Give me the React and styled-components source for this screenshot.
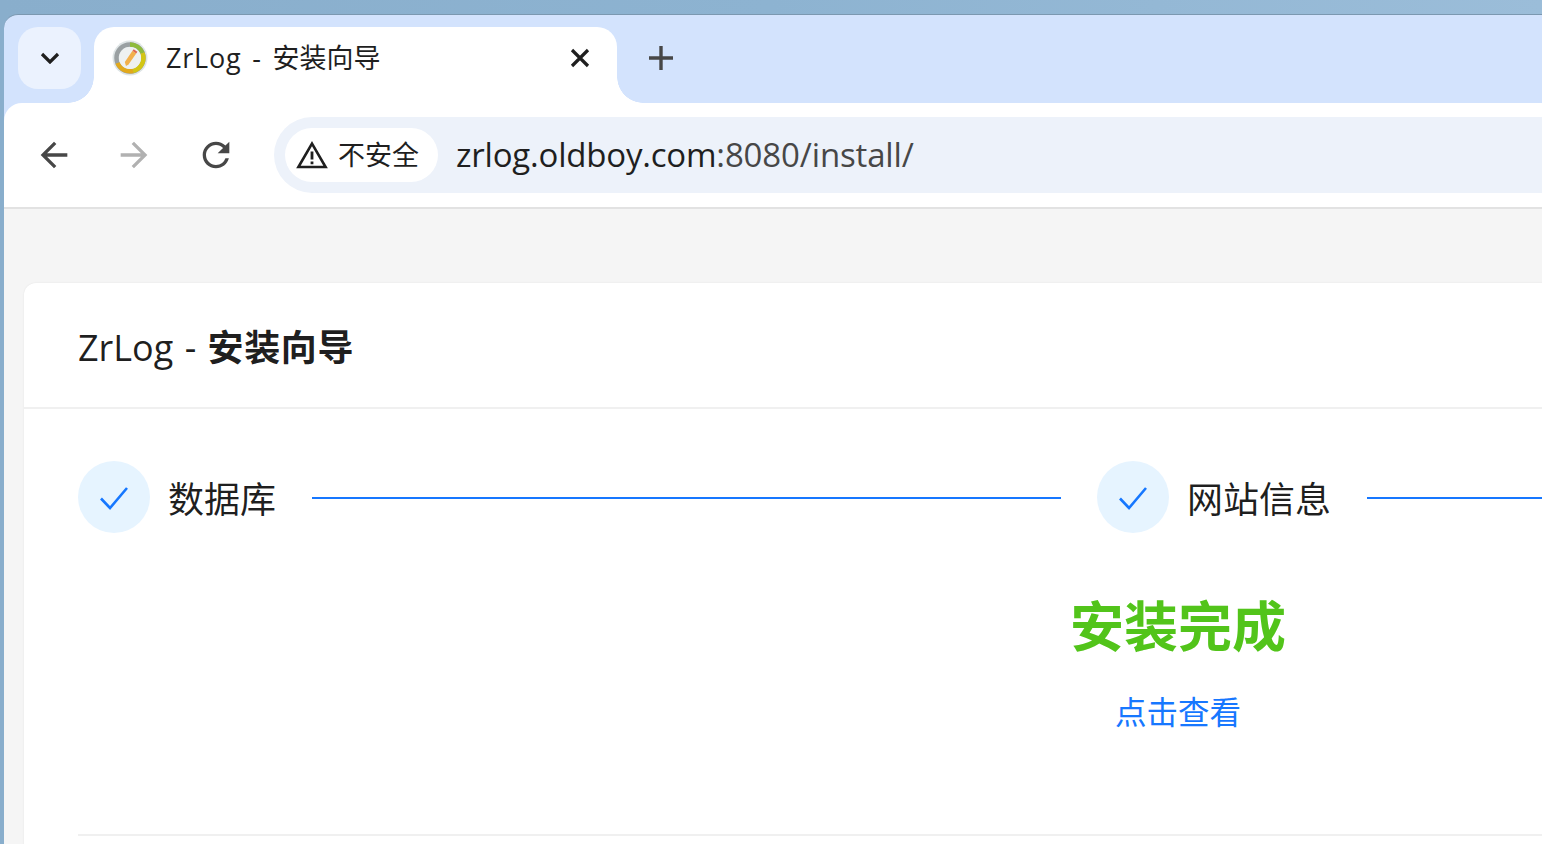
import React from "react";
import styled, { createGlobalStyle } from "styled-components";

const Global = createGlobalStyle`
  html, body { margin: 0; padding: 0; width: 1542px; height: 844px; overflow: hidden; }
  body { background: linear-gradient(90deg, #89aecc 0%, #8db3d1 50%, #9bbdd9 100%); }
  #root { width: 1542px; height: 844px; overflow: hidden; }
  * { box-sizing: border-box; }
`;

const FONT = `"Open Sans", "Noto Sans CJK SC", sans-serif`;

const Screen = styled.div`
  width: 1542px;
  height: 844px;
  padding: 14px 0 0 4px;
  overflow: hidden;
  font-family: ${FONT};
`;
const Browser = styled.div`
  width: 1600px;
  height: 830px;
  border-top: 1px solid #7b98b0;
  border-top-left-radius: 14px;
  background: #d3e3fd;
  overflow: hidden;
  display: flex;
  flex-direction: column;
`;
const TabStrip = styled.div`
  height: 88px;
  flex: none;
  padding: 12px 0 0 14px;
  display: flex;
  align-items: flex-start;
`;
const TabSearch = styled.button`
  width: 63px;
  height: 62px;
  border: 0;
  border-radius: 20px;
  background: #ebf2fe;
  display: flex;
  align-items: center;
  justify-content: center;
  padding: 0;
  position: relative;
  z-index: 2;
`;
const Tab = styled.div`
  width: 523px;
  height: 76px;
  margin-left: 13px;
  background: #fff;
  border-radius: 20px 20px 0 0;
  position: relative;
  display: flex;
  align-items: center;
  padding: 0 27px 14px 18px;
  &::before, &::after {
    content: "";
    position: absolute;
    bottom: 0;
    width: 26px;
    height: 26px;
  }
  &::before {
    right: 100%;
    background: radial-gradient(circle at 0 0, #d3e3fd 25.5px, #fff 26px);
  }
  &::after {
    left: 100%;
    background: radial-gradient(circle at 100% 0, #d3e3fd 25.5px, #fff 26px);
  }
`;
const TabTitle = styled.span`
  margin-left: 18px;
  flex: 1;
  font-size: 27px;
  line-height: 36px;
  color: #1f1f1f;
  font-weight: 400;
  white-space: pre;
`;
const TabLatin = styled.span`
  letter-spacing: 0.8px;
  word-spacing: 3px;
`;
const NewTab = styled.div`
  width: 24px;
  height: 24px;
  margin: 19px 0 0 32px;
  display: flex;
`;
const Toolbar = styled.div`
  height: 106px;
  flex: none;
  background: #fff;
  border-top-left-radius: 18px;
  border-bottom: 2px solid #e2e2e2;
  display: flex;
  align-items: flex-start;
  padding: 14px 0 0 30px;
  position: relative;
`;
const NavButton = styled.div`
  width: 40px;
  height: 76px;
  margin-right: ${p => p.$gap}px;
  display: flex;
  align-items: center;
  justify-content: center;
`;
const Omnibox = styled.div`
  height: 76px;
  flex: 1;
  margin-left: 38px;
  background: #edf2fa;
  border-radius: 38px 0 0 38px;
  display: flex;
  align-items: center;
  padding-left: 11px;
`;
const Chip = styled.div`
  width: 153px;
  height: 54px;
  background: #fff;
  border-radius: 27px;
  display: flex;
  align-items: center;
  padding-left: 11px;
  gap: 10px;
`;
const ChipText = styled.span`
  font-size: 27px;
  line-height: 36px;
  color: #1f1f1f;
  font-weight: 400;
`;
const Url = styled.div`
  margin-left: 18px;
  font-size: 33px;
  line-height: 44px;
  color: #1f1f1f;
  white-space: pre;
  letter-spacing: -0.2px;
`;
const UrlMuted = styled.span`
  color: #474747;
  letter-spacing: -0.15px;
`;
const Page = styled.div`
  flex: 1;
  background: #f5f5f5;
  padding: 74px 0 0 20px;
`;
const Card = styled.div`
  width: 2300px;
  height: 700px;
  background: #fff;
  border-radius: 12px 0 0 0;
  box-shadow: 0 0 2px rgba(0,0,0,.08);
`;
const CardHead = styled.div`
  height: 126px;
  border-bottom: 2px solid #f0f0f0;
  padding: 6px 0 0 54px;
  display: flex;
  align-items: center;
  font-size: 36px;
  line-height: 48px;
  color: rgba(0,0,0,.88);
  white-space: pre;
  word-spacing: 2px;
`;
const HeadStrong = styled.strong`
  font-weight: 700;
  letter-spacing: 0.6px;
`;
const CardBody = styled.div`
  padding: 52px 0 0 54px;
  width: 2254px;
`;
const Steps = styled.div`
  display: flex;
  width: 2200px;
`;
const Step = styled.div`
  flex: 0 0 ${p => p.$width}px;
  display: flex;
  align-items: flex-start;
  padding-right: 0;
`;
const StepIcon = styled.div`
  width: 72px;
  height: 72px;
  border-radius: 50%;
  background: #e6f4ff;
  display: flex;
  align-items: center;
  justify-content: center;
  padding-top: 2px;
  flex: none;
`;
const StepTitle = styled.div`
  margin-left: 18px;
  font-size: 36px;
  line-height: 78px;
  color: rgba(0,0,0,.88);
  font-weight: 400;
  white-space: nowrap;
`;
const StepLine = styled.div`
  flex: 1;
  height: 2px;
  background: #1677ff;
  margin: 36px 36px 0 36px;
`;
const Result = styled.div`
  display: flex;
  flex-direction: column;
  align-items: center;
  margin-top: 53px;
  height: 244px;
  border-bottom: 2px solid #f0f0f0;
`;
const ResultTitle = styled.h2`
  margin: 0;
  font-size: 54px;
  line-height: 68px;
  font-weight: 700;
  color: #52c41a;
`;
const ResultLink = styled.a`
  margin-top: 31px;
  font-size: 31.5px;
  line-height: 42px;
  color: #1677ff;
  font-weight: 400;
  text-decoration: none;
`;

const Check = () => (
  <svg width="32" height="26" viewBox="0 0 32 26" fill="none">
    <path d="M3 13.5 L12 23 L29 3" stroke="#1677ff" strokeWidth="2.6" />
  </svg>
);

const Favicon = () => (
  <svg width="36" height="36" viewBox="0 0 36 36" style={{ flex: "none" }}>
    <circle cx="18" cy="18" r="17.5" fill="#dfe5e6" />
    <circle cx="18" cy="18" r="13.5" fill="none" stroke="#9aa0a2" strokeWidth="4.5" />
    <path d="M18 4.5 A13.5 13.5 0 0 1 30.5 13" fill="none" stroke="#8fbb3c" strokeWidth="4.5" />
    <path d="M30.5 13 A13.5 13.5 0 0 1 21 31" fill="none" stroke="#d3c614" strokeWidth="4.5" />
    <path d="M21 31 A13.5 13.5 0 0 1 5.5 23" fill="none" stroke="#e2a91c" strokeWidth="4.5" />
    <circle cx="18" cy="18" r="11" fill="#eef1f1" />
    <path d="M14 26 L12.8 22 L20.5 10.8 L24.2 13.4 L16.5 24.6 Z" fill="#f2b04a" />
    <path d="M20.5 10.8 L21.7 9.2 L25.4 11.8 L24.2 13.4 Z" fill="#e0684f" />
  </svg>
);

export default function App() {
  return (
    <Screen>
      <Global />
      <Browser>
        <TabStrip>
          <TabSearch>
            <svg width="20" height="12" viewBox="0 0 20 12" fill="none">
              <path d="M2 2 L10 10 L18 2" stroke="#1f1f1f" strokeWidth="3.2" />
            </svg>
          </TabSearch>
          <Tab>
            <Favicon />
            <TabTitle><TabLatin>ZrLog - </TabLatin>安装向导</TabTitle>
            <svg width="20" height="20" viewBox="0 0 20 20" fill="none">
              <path d="M2 2 L18 18 M18 2 L2 18" stroke="#1f1f1f" strokeWidth="3.2" />
            </svg>
          </Tab>
          <NewTab>
            <svg width="24" height="24" viewBox="0 0 24 24" fill="none">
              <path d="M12 0 V24 M0 12 H24" stroke="#474747" strokeWidth="3.4" />
            </svg>
          </NewTab>
        </TabStrip>
        <Toolbar>
          <NavButton $gap={40}>
            <svg width="40" height="40" viewBox="0 0 24 24" fill="#474747">
              <path d="M20 11H7.83l5.59-5.59L12 4l-8 8 8 8 1.41-1.41L7.83 13H20v-2z" />
            </svg>
          </NavButton>
          <NavButton $gap={42}>
            <svg width="40" height="40" viewBox="0 0 24 24" fill="#b1b1b1">
              <path d="M4 11h12.17l-5.59-5.59L12 4l8 8-8 8-1.41-1.41L16.17 13H4v-2z" />
            </svg>
          </NavButton>
          <NavButton $gap={0}>
            <svg width="40" height="40" viewBox="0 0 24 24" fill="#474747">
              <path d="M17.65 6.35A7.958 7.958 0 0 0 12 4c-4.42 0-7.99 3.58-7.99 8s3.57 8 7.99 8c3.73 0 6.84-2.55 7.73-6h-2.08A5.99 5.99 0 0 1 12 18c-3.31 0-6-2.69-6-6s2.69-6 6-6c1.66 0 3.14.69 4.22 1.78L13 11h7V4l-2.35 2.35z" />
            </svg>
          </NavButton>
          <Omnibox>
            <Chip>
              <svg width="32" height="28" viewBox="0 0 32 28" fill="none" style={{ flex: "none" }}>
                <path d="M16 2.6 L29.6 26 H2.4 Z" stroke="#1f1f1f" strokeWidth="2.6" strokeLinejoin="miter" />
                <path d="M16 10.5 V18.5" stroke="#1f1f1f" strokeWidth="2.8" />
                <path d="M16 20.5 V23.2" stroke="#1f1f1f" strokeWidth="2.8" />
              </svg>
              <ChipText>不安全</ChipText>
            </Chip>
            <Url>zrlog.oldboy.com<UrlMuted>:8080/install/</UrlMuted></Url>
          </Omnibox>
        </Toolbar>
        <Page>
          <Card>
            <CardHead>ZrLog - <HeadStrong>安装向导</HeadStrong></CardHead>
            <CardBody>
              <Steps>
                <Step $width={1019}>
                  <StepIcon><Check /></StepIcon>
                  <StepTitle>数据库</StepTitle>
                  <StepLine />
                </Step>
                <Step $width={1019}>
                  <StepIcon><Check /></StepIcon>
                  <StepTitle>网站信息</StepTitle>
                  <StepLine />
                </Step>
              </Steps>
              <Result>
                <ResultTitle>安装完成</ResultTitle>
                <ResultLink href="#">点击查看</ResultLink>
              </Result>
            </CardBody>
          </Card>
        </Page>
      </Browser>
    </Screen>
  );
}
